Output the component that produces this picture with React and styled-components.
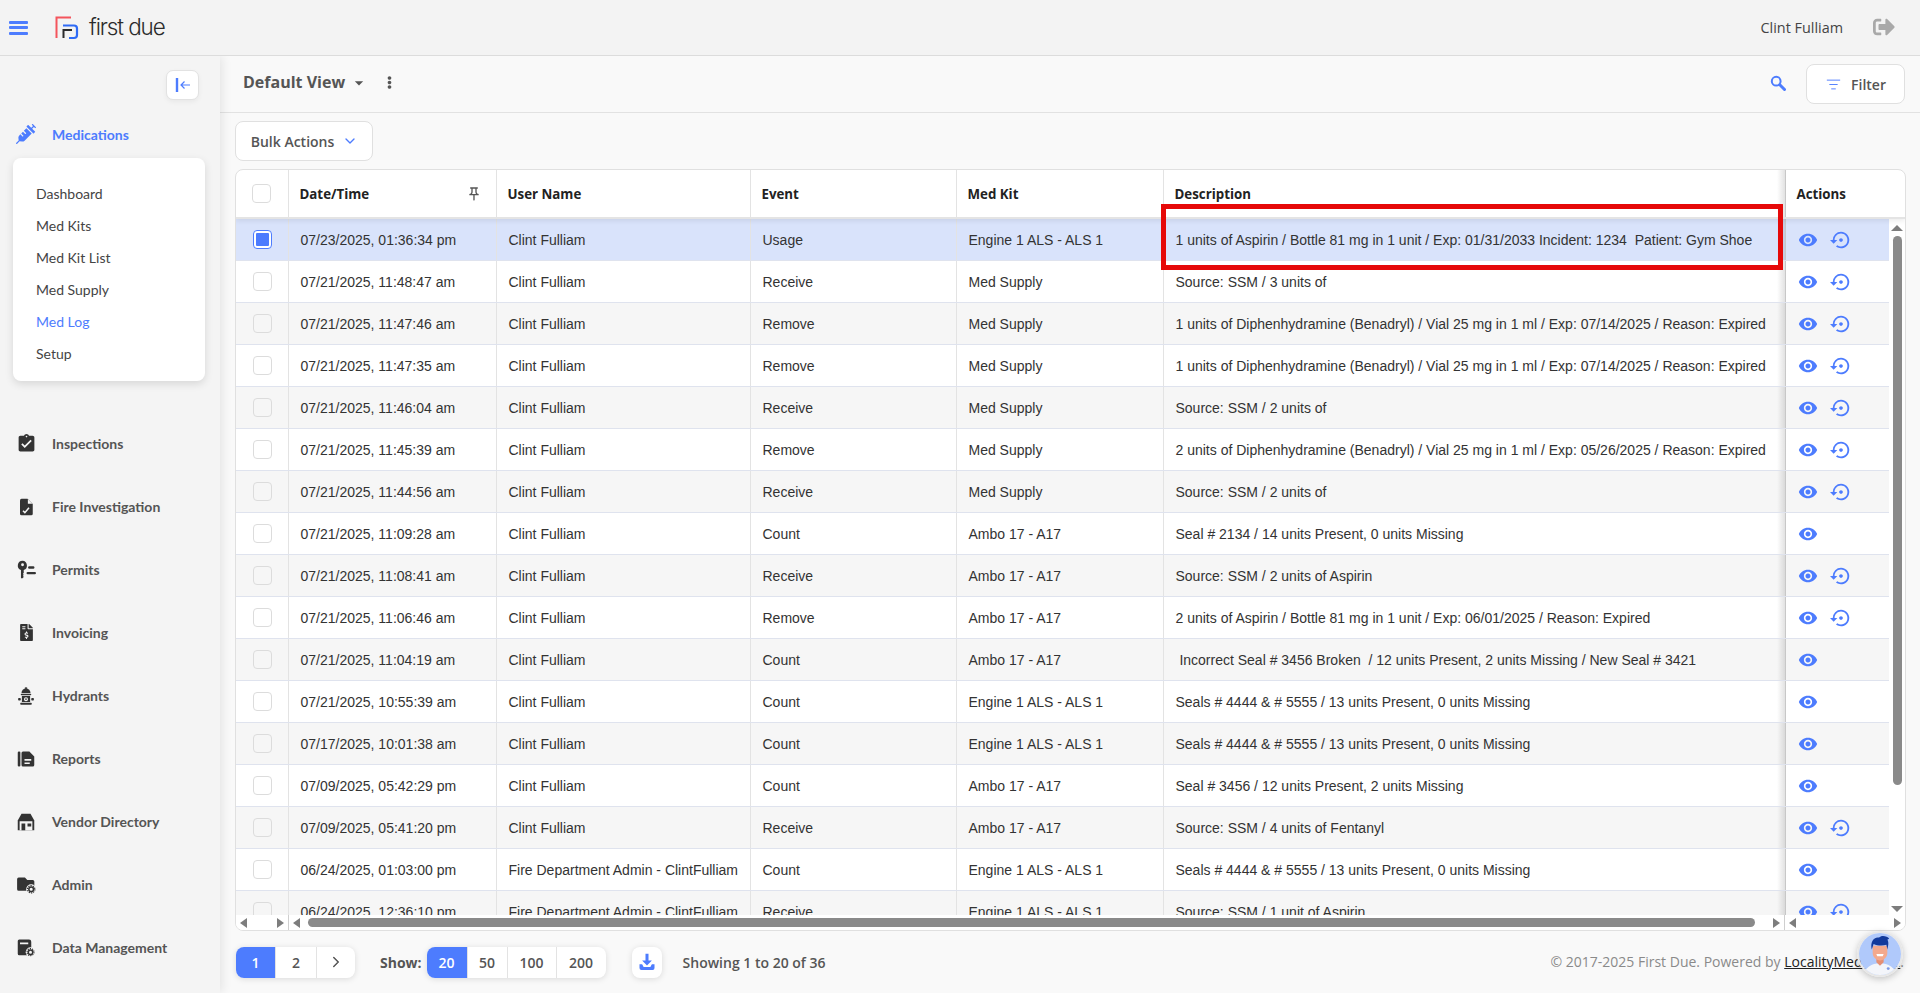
import React from 'react';
import styled, { createGlobalStyle, css } from 'styled-components';
import { FaSyringe, FaFileInvoiceDollar, FaSignOutAlt, FaEllipsisV } from 'react-icons/fa';
import {
  MdAssignmentTurnedIn,
  MdVisibility,
  MdSettingsBackupRestore,
  MdOutlinePushPin,
  MdArrowDropDown,
} from 'react-icons/md';
import { ChevronDown, ChevronRight, ListFilter } from 'lucide-react';

const ACCENT = '#4d7cfe';
const DARK = '#333';

const GlobalStyle = createGlobalStyle`
  html, body, #root {
    margin: 0;
    height: 100%;
    overflow: hidden;
  }
  body {
    font-family: "Open Sans", "Liberation Sans", sans-serif;
    background: #f9f9f9;
    color: #444;
  }
`;

const Page = styled.div`
  height: 100vh;
  display: flex;
  flex-direction: column;
`;

const TopBar = styled.header`
  height: 56px;
  box-sizing: border-box;
  flex: none;
  display: flex;
  align-items: center;
  padding: 0 25px 0 9px;
  background: #f3f3f3;
  border-bottom: 1px solid #dcdcdc;
  position: relative;
  z-index: 3;
`;

const Burger = styled.div`
  width: 19px;
  height: 14px;
  display: flex;
  flex-direction: column;
  justify-content: space-between;
  margin-right: 27px;

  span {
    height: 3px;
    border-radius: 1px;
    background: ${ACCENT};
  }
`;

const LogoText = styled.span`
  font-family: Inter, "Liberation Sans", sans-serif;
  font-size: 22.5px;
  font-weight: 300;
  letter-spacing: -1.1px;
  color: #2b2b2b;
  margin-left: 10px;
  margin-top: -2px;
`;

const UserName = styled.span`
  margin-left: auto;
  font-size: 14.4px;
  color: #444;
`;

const LogoutBtn = styled.span`
  display: flex;
  margin: -2px 0 0 30px;
  color: #a9a9a9;
`;

const Body = styled.div`
  flex: 1;
  min-height: 0;
  display: flex;
`;

const Sidebar = styled.aside`
  width: 220px;
  flex: none;
  background: #f4f4f4;
  box-shadow: 2px 0 10px rgba(0, 0, 0, 0.09);
  position: relative;
  z-index: 2;
  padding-top: 14px;
  box-sizing: border-box;
`;

const CollapseBtn = styled.div`
  width: 33px;
  height: 30px;
  margin: 0 0 14px 166px;
  box-sizing: border-box;
  display: flex;
  align-items: center;
  justify-content: center;
  background: #fff;
  border: 1px solid #e2e2e2;
  border-radius: 7px;
  box-shadow: 0 2px 5px rgba(0, 0, 0, 0.05);
`;

const NavItem = styled.div`
  height: ${(p) => (p.$open ? '40px' : '63px')};
  display: flex;
  align-items: center;
  font-family: Lato, "Liberation Sans", sans-serif;
  font-size: 14px;
  font-weight: 700;
  color: ${(p) => (p.$open ? ACCENT : '#555')};
`;

const NavIcon = styled.span`
  width: 52px;
  flex: none;
  display: flex;
  justify-content: center;
  color: ${(p) => (p.$open ? ACCENT : DARK)};
`;

const SubMenu = styled.div`
  margin: 4px 15px 31px 13px;
  padding: 19px 0 12px 23px;
  background: #fff;
  border-radius: 8px;
  box-shadow: 0 3px 9px rgba(0, 0, 0, 0.12);
`;

const SubItem = styled.div`
  height: 32px;
  display: flex;
  align-items: center;
  font-family: Lato, "Liberation Sans", sans-serif;
  font-size: 14px;
  color: ${(p) => (p.$active ? ACCENT : '#444')};
`;

const Main = styled.main`
  flex: 1;
  min-width: 0;
  display: flex;
  flex-direction: column;
`;

const ViewBar = styled.div`
  height: 57px;
  flex: none;
  box-sizing: border-box;
  display: flex;
  align-items: center;
  padding: 0 15px 0 23px;
  border-bottom: 1px solid #e2e2e2;
`;

const ViewTitle = styled.span`
  margin-top: -4px;
  font-size: 16px;
  font-weight: 700;
  color: #555;
`;

const ViewCaret = styled.span`
  display: flex;
  margin: -3px 0 0 4px;
  color: #555;
`;

const Kebab = styled.span`
  display: flex;
  margin: -3px 0 0 14px;
  color: #555;
`;

const SearchBtn = styled.span`
  display: flex;
  margin: -3px 0 0 auto;
`;

const OutlineBtn = styled.button`
  height: ${(p) => p.$h}px;
  width: ${(p) => p.$w}px;
  display: flex;
  align-items: center;
  justify-content: center;
  gap: ${(p) => p.$gap}px;
  padding: 0 0 0 1px;
  background: #fff;
  border: 1px solid #e0e0e0;
  border-radius: 8px;
  font-family: "Open Sans", sans-serif;
  font-size: 14px;
  font-weight: 600;
  color: #555;
`;

const FilterWrap = styled.div`
  margin-left: 20px;
`;

const Toolbar = styled.div`
  flex: none;
  padding: 8px 0 8px 15px;
`;

const TableCard = styled.section`
  flex: 1;
  min-height: 0;
  margin: 0 14px 0 15px;
  position: relative;
  display: flex;
  flex-direction: column;
  background: #fff;
  border: 1px solid #e0e0e0;
  border-radius: 8px;
  overflow: hidden;
`;

const COLS = '53px 208px 254px 206px 207px 622px 1fr';

const edgeShade = css`
  position: relative;

  &::before {
    content: '';
    position: absolute;
    left: -9px;
    top: 0;
    bottom: 0;
    width: 9px;
    background: linear-gradient(to left, rgba(0, 0, 0, 0.13), rgba(0, 0, 0, 0));
  }
`;

const HeadRow = styled.div`
  flex: none;
  height: 49px;
  display: grid;
  grid-template-columns: ${COLS};
  box-sizing: border-box;
  border-bottom: 2px solid #e4e4e4;
  box-shadow: 0 2px 5px rgba(0, 0, 0, 0.08);
  position: relative;
  z-index: 2;
`;

const HeadCell = styled.div`
  display: flex;
  align-items: center;
  justify-content: ${(p) => (p.$center ? 'center' : 'space-between')};
  padding: ${(p) => (p.$center ? '0 2px 0 0' : '0 14px 0 10.5px')};
  font-size: 13.3px;
  font-weight: 700;
  color: #222;
  border-right: ${(p) => (p.$last ? 'none' : '1px solid #e3e3e3')};
  ${(p) => p.$last && edgeShade}
`;

const TableBody = styled.div`
  flex: 1;
  min-height: 0;
  display: flex;
`;

const Rows = styled.div`
  flex: 1;
  min-width: 0;
  overflow: hidden;
`;

const Row = styled.div`
  height: 42px;
  box-sizing: border-box;
  display: grid;
  grid-template-columns: ${COLS};
  border-bottom: 1px solid #dfe3ee;
  background: ${(p) => (p.$selected ? '#d9e3fb' : p.$odd ? '#f6f6f6' : '#fff')};
  font-family: "Liberation Sans", Arial, sans-serif;
  font-size: 14px;
  color: #333;
`;

const Cell = styled.div`
  display: flex;
  align-items: center;
  padding-left: 11.5px;
  white-space: pre;
  overflow: hidden;
  border-right: 1px solid #e3e3e3;
`;

const CheckCell = styled(Cell)`
  justify-content: center;
  padding: 0;
`;

const ActionsCell = styled.div`
  display: flex;
  align-items: center;
  gap: 12px;
  padding-left: 12px;
  color: ${ACCENT};
  background: inherit;
  ${edgeShade}
`;

const Check = styled.span`
  width: 19px;
  height: 19px;
  box-sizing: border-box;
  display: flex;
  align-items: center;
  justify-content: center;
  background: ${(p) => (p.$checked ? '#fff' : 'transparent')};
  border: 1px solid ${(p) => (p.$checked ? ACCENT : '#dcdcdc')};
  border-radius: 4px;

  &::after {
    content: '';
    display: ${(p) => (p.$checked ? 'block' : 'none')};
    width: 13px;
    height: 13px;
    background: ${ACCENT};
    border-radius: 1px;
  }
`;

const VScroll = styled.div`
  width: 16px;
  flex: none;
  display: flex;
  flex-direction: column;
  align-items: center;
  background: #fff;
  padding: 6px 0 3px;
  box-sizing: border-box;
`;

const VThumb = styled.div`
  width: 9px;
  height: 549px;
  margin: 5px 0 auto;
  border-radius: 5px;
  background: #8a8a8a;
`;

const HScroll = styled.div`
  flex: none;
  height: 15px;
  display: flex;
  align-items: center;
  background: #fff;
`;

const ScrollZone = styled.div`
  width: ${(p) => p.$w}px;
  ${(p) => p.$grow && 'flex: 1;'}
  height: 100%;
  box-sizing: border-box;
  display: flex;
  align-items: center;
  justify-content: space-between;
  padding: 0 4px;
  border-right: ${(p) => (p.$divide ? '1px solid #cfcfcf' : 'none')};
`;

const HThumb = styled.div`
  flex: 1;
  height: 9px;
  margin: 0 18px 0 8px;
  border-radius: 5px;
  background: #8a8a8a;
`;

const Arrow = styled.span`
  width: 0;
  height: 0;
  flex: none;
  border-style: solid;
  border-color: transparent;
  ${(p) => p.$dir === 'left' && 'border-width: 5px 7px 5px 0; border-right-color: #7d7d7d;'}
  ${(p) => p.$dir === 'right' && 'border-width: 5px 0 5px 7px; border-left-color: #7d7d7d;'}
  ${(p) => p.$dir === 'up' && 'border-width: 0 6px 6px; border-bottom-color: #7d7d7d;'}
  ${(p) => p.$dir === 'down' && 'border-width: 6px 6px 0; border-top-color: #7d7d7d;'}
`;

const Highlight = styled.div`
  position: absolute;
  left: 925px;
  top: 34px;
  width: 622px;
  height: 66px;
  box-sizing: border-box;
  border: 5px solid #e60909;
  z-index: 4;
  pointer-events: none;
`;

const Footer = styled.footer`
  flex: none;
  height: 62px;
  display: flex;
  align-items: center;
  padding: 0 16px 0 16px;
`;

const BtnGroup = styled.div`
  display: flex;
  height: 31px;
  background: #fff;
  border-radius: 8px;
  box-shadow: 0 1px 6px rgba(0, 0, 0, 0.13);
  overflow: hidden;
`;

const GroupBtn = styled.div`
  width: ${(p) => p.$w}px;
  box-sizing: border-box;
  display: flex;
  align-items: center;
  justify-content: center;
  font-size: 14px;
  font-weight: 600;
  color: ${(p) => (p.$active ? '#fff' : '#555')};
  background: ${(p) => (p.$active ? ACCENT : 'transparent')};
  border-right: 1px solid #e3e3e3;

  &:last-child {
    border-right: none;
  }
`;

const ShowLabel = styled.span`
  margin: 0 5px 0 25px;
  font-size: 14px;
  font-weight: 700;
  color: #555;
`;

const DownloadBtn = styled.div`
  width: 30px;
  height: 31px;
  margin-left: 26px;
  display: flex;
  align-items: center;
  justify-content: center;
  background: #fff;
  border-radius: 8px;
  box-shadow: 0 1px 6px rgba(0, 0, 0, 0.13);
`;

const Showing = styled.span`
  margin-left: 21px;
  font-size: 14px;
  font-weight: 600;
  color: #555;
`;

const Copyright = styled.span`
  margin-left: auto;
  margin-top: -2px;
  font-size: 14px;
  color: #8a8a8a;

  a {
    color: #222;
    text-decoration: underline;
  }
`;

const Assistant = styled.div`
  position: fixed;
  right: 17px;
  bottom: 16px;
  width: 46px;
  height: 46px;
  box-sizing: border-box;
  border-radius: 50%;
  overflow: hidden;
  border: 2px solid #e7e7e7;
  box-shadow: 0 2px 7px rgba(0, 0, 0, 0.22);
  z-index: 5;
  display: flex;
`;

const Logo = () => (
  <svg width="24" height="24" viewBox="55 17 24 24" fill="none" strokeWidth="2">
    <path d="M56.5 39V18.5H71" stroke="#f4545c" />
    <path d="M63 26.5h11a3 3 0 0 1 3 3V36a3 3 0 0 1-3 3h-5" stroke="#2f6bf5" strokeWidth="2.2" />
    <path d="M63.5 39v-8H72" stroke="#2b2b2b" />
  </svg>
);

const CollapseIcon = () => (
  <svg width="18" height="18" viewBox="0 0 18 18" fill="none" stroke={ACCENT}>
    <path d="M3 2v14" strokeWidth="2.4" />
    <path d="M16 9H7M10.5 5.5 7 9l3.5 3.5" strokeWidth="1.2" />
  </svg>
);

const SearchIcon = () => (
  <svg width="16" height="16" viewBox="0 0 16 16" fill="none" stroke={ACCENT}>
    <circle cx="6.2" cy="6.2" r="4.4" strokeWidth="2" />
    <path d="M9.800 9.800 14.500 14.500" strokeWidth="3" strokeLinecap="round" />
  </svg>
);

const Gear = ({ x, y }) => (
  <g>
    <circle cx={x} cy={y} r="6.4" fill="#f4f4f4" />
    <circle cx={x} cy={y} r="3" fill="none" stroke={DARK} strokeWidth="2" />
    <circle cx={x} cy={y} r="4.7" fill="none" stroke={DARK} strokeWidth="1.5" strokeDasharray="1.6 1.35" />
  </g>
);

const FileCheckIcon = () => (
  <svg width="18" height="18" viewBox="0 0 24 24">
    <path d="M6 1h8l7 7v13a2 2 0 0 1-2 2H6a2 2 0 0 1-2-2V3a2 2 0 0 1 2-2z" fill={DARK} />
    <path d="M14.5 1.5 20.500 7.500h-6z" fill="#f4f4f4" />
    <path d="M8 17l2.500 2.500L16 13" fill="none" stroke="#f4f4f4" strokeWidth="2" />
  </svg>
);

const PermitIcon = () => (
  <svg width="19" height="19" viewBox="0 0 24 24" fill={DARK}>
    <path d="M7 1a6 6 0 0 0-2 11.650V23h2l1.500-1.500L7.500 20l1-1-1-1.500 1-1V12.650A6 6 0 0 0 7 1zm0 3.200a1.800 1.800 0 1 1 0 3.600 1.800 1.800 0 0 1 0-3.600z" />
    <rect x="14" y="8" width="8" height="3" rx="1.500" />
    <rect x="12" y="15" width="12" height="3" rx="1.500" />
  </svg>
);

const HydrantIcon = () => (
  <svg width="18" height="18" viewBox="0 0 24 24" fill={DARK}>
    <rect x="10.500" y="0.500" width="3" height="2" />
    <path d="M6 8a6 6 0 0 1 12 0z" />
    <rect x="5" y="9" width="14" height="2" rx="1" />
    <path fillRule="evenodd" d="M6.500 12h11v8h-11zM12 13.500a2.700 2.700 0 1 0 0 5.400 2.700 2.700 0 0 0 0-5.400z" />
    <circle cx="12" cy="16.200" r="1.100" />
    <rect x="1.500" y="14.500" width="3.500" height="3.500" rx="1" />
    <rect x="19" y="14.500" width="3.500" height="3.500" rx="1" />
    <rect x="4.500" y="21" width="15" height="2.500" rx="0.500" />
  </svg>
);

const ReportIcon = () => (
  <svg width="18" height="18" viewBox="0 0 24 24" fill={DARK}>
    <rect x="1" y="2" width="3.500" height="20" rx="1.500" />
    <path fillRule="evenodd" d="M8 2h8.500L23 8.500V20a2 2 0 0 1-2 2H8a2 2 0 0 1-2-2V4a2 2 0 0 1 2-2zm2 10v2.200h9V12zm0 4.500v2.200h7v-2.200z" />
  </svg>
);

const VendorIcon = () => (
  <svg width="18" height="18" viewBox="0 0 24 24" fill={DARK}>
    <path d="M6 1h12l5 9v13H1V10z" />
    <path d="M3.500 11h17v12h-17z" fill="#f4f4f4" />
    <path d="M6 14h5v9H6zM14 14h5v4h-5z" />
  </svg>
);

const AdminIcon = () => (
  <svg width="19" height="18" viewBox="0 0 24 23" fill={DARK}>
    <path d="M2 2h8l3 3h7a2 2 0 0 1 2 2v10a2 2 0 0 1-2 2H2a2 2 0 0 1-2-2V4a2 2 0 0 1 2-2z" />
    <Gear x="18" y="17" />
  </svg>
);

const DataIcon = () => (
  <svg width="18" height="18" viewBox="0 0 24 23" fill={DARK}>
    <path fillRule="evenodd" d="M3 0h13a3 3 0 0 1 3 3v15a3 3 0 0 1-3 3H3a2 2 0 0 1-2-2V2a2 2 0 0 1 2-2zm1 4v2.500h11V4z" />
    <Gear x="18" y="17" />
  </svg>
);

const DownloadIcon = () => (
  <svg width="18" height="18" viewBox="0 0 24 24" fill={ACCENT}>
    <path d="M10 1h4v9h4.500L12 16.500 5.500 10H10z" />
    <path d="M2 15v5a2.500 2.500 0 0 0 2.500 2.500h15A2.500 2.500 0 0 0 22 20v-5h-3.500l-2 3.500h-9l-2-3.500z" />
  </svg>
);

const AvatarArt = () => (
  <svg width="42" height="42" viewBox="0 0 46 46">
    <rect width="46" height="46" fill="#b0c9fb" />
    <path d="M5 46c1-8 9-13 18-13s17 5 18 13z" fill="#f3f5fa" />
    <path d="M19 26h8v6l-4 4-4-4z" fill="#e58f73" />
    <path d="M15 14h16v8c0 5-4 8-8 8s-8-3-8-8z" fill="#f3a98d" />
    <path d="M14 18c-2-8 2-14 8-13 2-3 9-2 11 1-1 1-1 1-2 1 2 3 1 7 0 11l-1-5c-4 1-10 1-14-1z" fill="#123a9c" />
    <path d="M19 23h8l-1 2.500h-6z" fill="#fff" />
    <circle cx="32" cy="39" r="1.600" fill="#7b98e6" />
  </svg>
);

const navTop = [
  ['Inspections', <MdAssignmentTurnedIn size={21} />],
  ['Fire Investigation', <FileCheckIcon />],
  ['Permits', <PermitIcon />],
  ['Invoicing', <FaFileInvoiceDollar size={17} />],
  ['Hydrants', <HydrantIcon />],
  ['Reports', <ReportIcon />],
  ['Vendor Directory', <VendorIcon />],
  ['Admin', <AdminIcon />],
  ['Data Management', <DataIcon />],
];

const subItems = ['Dashboard', 'Med Kits', 'Med Kit List', 'Med Supply', 'Med Log', 'Setup'];

const CF = 'Clint Fulliam';
const ADMIN = 'Fire Department Admin - ClintFulliam';
const DIPH = 'of Diphenhydramine (Benadryl) / Vial 25 mg in 1 ml / Exp:';

const logRows = [
  ['07/23/2025, 01:36:34 pm', CF, 'Usage', 'Engine 1 ALS - ALS 1', '1 units of Aspirin / Bottle 81 mg in 1 unit / Exp: 01/31/2033 Incident: 1234  Patient: Gym Shoe'],
  ['07/21/2025, 11:48:47 am', CF, 'Receive', 'Med Supply', 'Source: SSM / 3 units of'],
  ['07/21/2025, 11:47:46 am', CF, 'Remove', 'Med Supply', `1 units ${DIPH} 07/14/2025 / Reason: Expired`],
  ['07/21/2025, 11:47:35 am', CF, 'Remove', 'Med Supply', `1 units ${DIPH} 07/14/2025 / Reason: Expired`],
  ['07/21/2025, 11:46:04 am', CF, 'Receive', 'Med Supply', 'Source: SSM / 2 units of'],
  ['07/21/2025, 11:45:39 am', CF, 'Remove', 'Med Supply', `2 units ${DIPH} 05/26/2025 / Reason: Expired`],
  ['07/21/2025, 11:44:56 am', CF, 'Receive', 'Med Supply', 'Source: SSM / 2 units of'],
  ['07/21/2025, 11:09:28 am', CF, 'Count', 'Ambo 17 - A17', 'Seal # 2134 / 14 units Present, 0 units Missing'],
  ['07/21/2025, 11:08:41 am', CF, 'Receive', 'Ambo 17 - A17', 'Source: SSM / 2 units of Aspirin'],
  ['07/21/2025, 11:06:46 am', CF, 'Remove', 'Ambo 17 - A17', '2 units of Aspirin / Bottle 81 mg in 1 unit / Exp: 06/01/2025 / Reason: Expired'],
  ['07/21/2025, 11:04:19 am', CF, 'Count', 'Ambo 17 - A17', ' Incorrect Seal # 3456 Broken  / 12 units Present, 2 units Missing / New Seal # 3421'],
  ['07/21/2025, 10:55:39 am', CF, 'Count', 'Engine 1 ALS - ALS 1', 'Seals # 4444 & # 5555 / 13 units Present, 0 units Missing'],
  ['07/17/2025, 10:01:38 am', CF, 'Count', 'Engine 1 ALS - ALS 1', 'Seals # 4444 & # 5555 / 13 units Present, 0 units Missing'],
  ['07/09/2025, 05:42:29 pm', CF, 'Count', 'Ambo 17 - A17', 'Seal # 3456 / 12 units Present, 2 units Missing'],
  ['07/09/2025, 05:41:20 pm', CF, 'Receive', 'Ambo 17 - A17', 'Source: SSM / 4 units of Fentanyl'],
  ['06/24/2025, 01:03:00 pm', ADMIN, 'Count', 'Engine 1 ALS - ALS 1', 'Seals # 4444 & # 5555 / 13 units Present, 0 units Missing'],
  ['06/24/2025, 12:36:10 pm', ADMIN, 'Receive', 'Engine 1 ALS - ALS 1', 'Source: SSM / 1 unit of Aspirin'],
];

const App = () => (
  <Page>
    <GlobalStyle />
    <TopBar>
      <Burger>
        <span />
        <span />
        <span />
      </Burger>
      <Logo />
      <LogoText>first due</LogoText>
      <UserName>{CF}</UserName>
      <LogoutBtn>
        <FaSignOutAlt size={22} />
      </LogoutBtn>
    </TopBar>
    <Body>
      <Sidebar>
        <CollapseBtn>
          <CollapseIcon />
        </CollapseBtn>
        <NavItem $open>
          <NavIcon $open>
            <FaSyringe size={20} />
          </NavIcon>
          Medications
        </NavItem>
        <SubMenu>
          {subItems.map((s) => (
            <SubItem key={s} $active={s === 'Med Log'}>
              {s}
            </SubItem>
          ))}
        </SubMenu>
        {navTop.map(([label, icon]) => (
          <NavItem key={label}>
            <NavIcon>{icon}</NavIcon>
            {label}
          </NavItem>
        ))}
      </Sidebar>
      <Main>
        <ViewBar>
          <ViewTitle>Default View</ViewTitle>
          <ViewCaret>
            <MdArrowDropDown size={20} />
          </ViewCaret>
          <Kebab>
            <FaEllipsisV size={13} />
          </Kebab>
          <SearchBtn>
            <SearchIcon />
          </SearchBtn>
          <FilterWrap>
            <OutlineBtn $w={99} $h={40} $gap={10}>
              <ListFilter size={15} color={ACCENT} strokeWidth={1.5} />
              Filter
            </OutlineBtn>
          </FilterWrap>
        </ViewBar>
        <Toolbar>
          <OutlineBtn $w={138} $h={40} $gap={8}>
            Bulk Actions
            <ChevronDown size={16} color={ACCENT} />
          </OutlineBtn>
        </Toolbar>
        <TableCard>
          <HeadRow>
            <HeadCell $center>
              <Check />
            </HeadCell>
            <HeadCell>
              Date/Time
              <MdOutlinePushPin size={16} color="#555" />
            </HeadCell>
            <HeadCell>User Name</HeadCell>
            <HeadCell>Event</HeadCell>
            <HeadCell>Med Kit</HeadCell>
            <HeadCell>Description</HeadCell>
            <HeadCell $last>Actions</HeadCell>
          </HeadRow>
          <TableBody>
            <Rows>
              {logRows.map((r, i) => (
                <Row key={r[0]} $selected={i === 0} $odd={i % 2 === 0}>
                  <CheckCell>
                    <Check $checked={i === 0} />
                  </CheckCell>
                  <Cell>{r[0]}</Cell>
                  <Cell>{r[1]}</Cell>
                  <Cell>{r[2]}</Cell>
                  <Cell>{r[3]}</Cell>
                  <Cell>{r[4]}</Cell>
                  <ActionsCell>
                    <MdVisibility size={20} />
                    {r[2] !== 'Count' && <MdSettingsBackupRestore size={22} />}
                  </ActionsCell>
                </Row>
              ))}
            </Rows>
            <VScroll>
              <Arrow $dir="up" />
              <VThumb />
              <Arrow $dir="down" />
            </VScroll>
          </TableBody>
          <HScroll>
            <ScrollZone $w={53} $divide>
              <Arrow $dir="left" />
              <Arrow $dir="right" />
            </ScrollZone>
            <ScrollZone $grow $divide>
              <Arrow $dir="left" />
              <HThumb />
              <Arrow $dir="right" />
            </ScrollZone>
            <ScrollZone $w={120}>
              <Arrow $dir="left" />
              <Arrow $dir="right" />
            </ScrollZone>
          </HScroll>
          <Highlight />
        </TableCard>
        <Footer>
          <BtnGroup>
            <GroupBtn $w={40} $active>1</GroupBtn>
            <GroupBtn $w={41}>2</GroupBtn>
            <GroupBtn $w={38}>
              <ChevronRight size={18} />
            </GroupBtn>
          </BtnGroup>
          <ShowLabel>Show:</ShowLabel>
          <BtnGroup>
            <GroupBtn $w={41} $active>20</GroupBtn>
            <GroupBtn $w={40}>50</GroupBtn>
            <GroupBtn $w={49}>100</GroupBtn>
            <GroupBtn $w={49}>200</GroupBtn>
          </BtnGroup>
          <DownloadBtn>
            <DownloadIcon />
          </DownloadBtn>
          <Showing>Showing 1 to 20 of 36</Showing>
          <Copyright>
            © 2017-2025 First Due. Powered by <a href="#top">LocalityMedia, Inc</a>.
          </Copyright>
        </Footer>
      </Main>
    </Body>
    <Assistant>
      <AvatarArt />
    </Assistant>
  </Page>
);

export default App;
